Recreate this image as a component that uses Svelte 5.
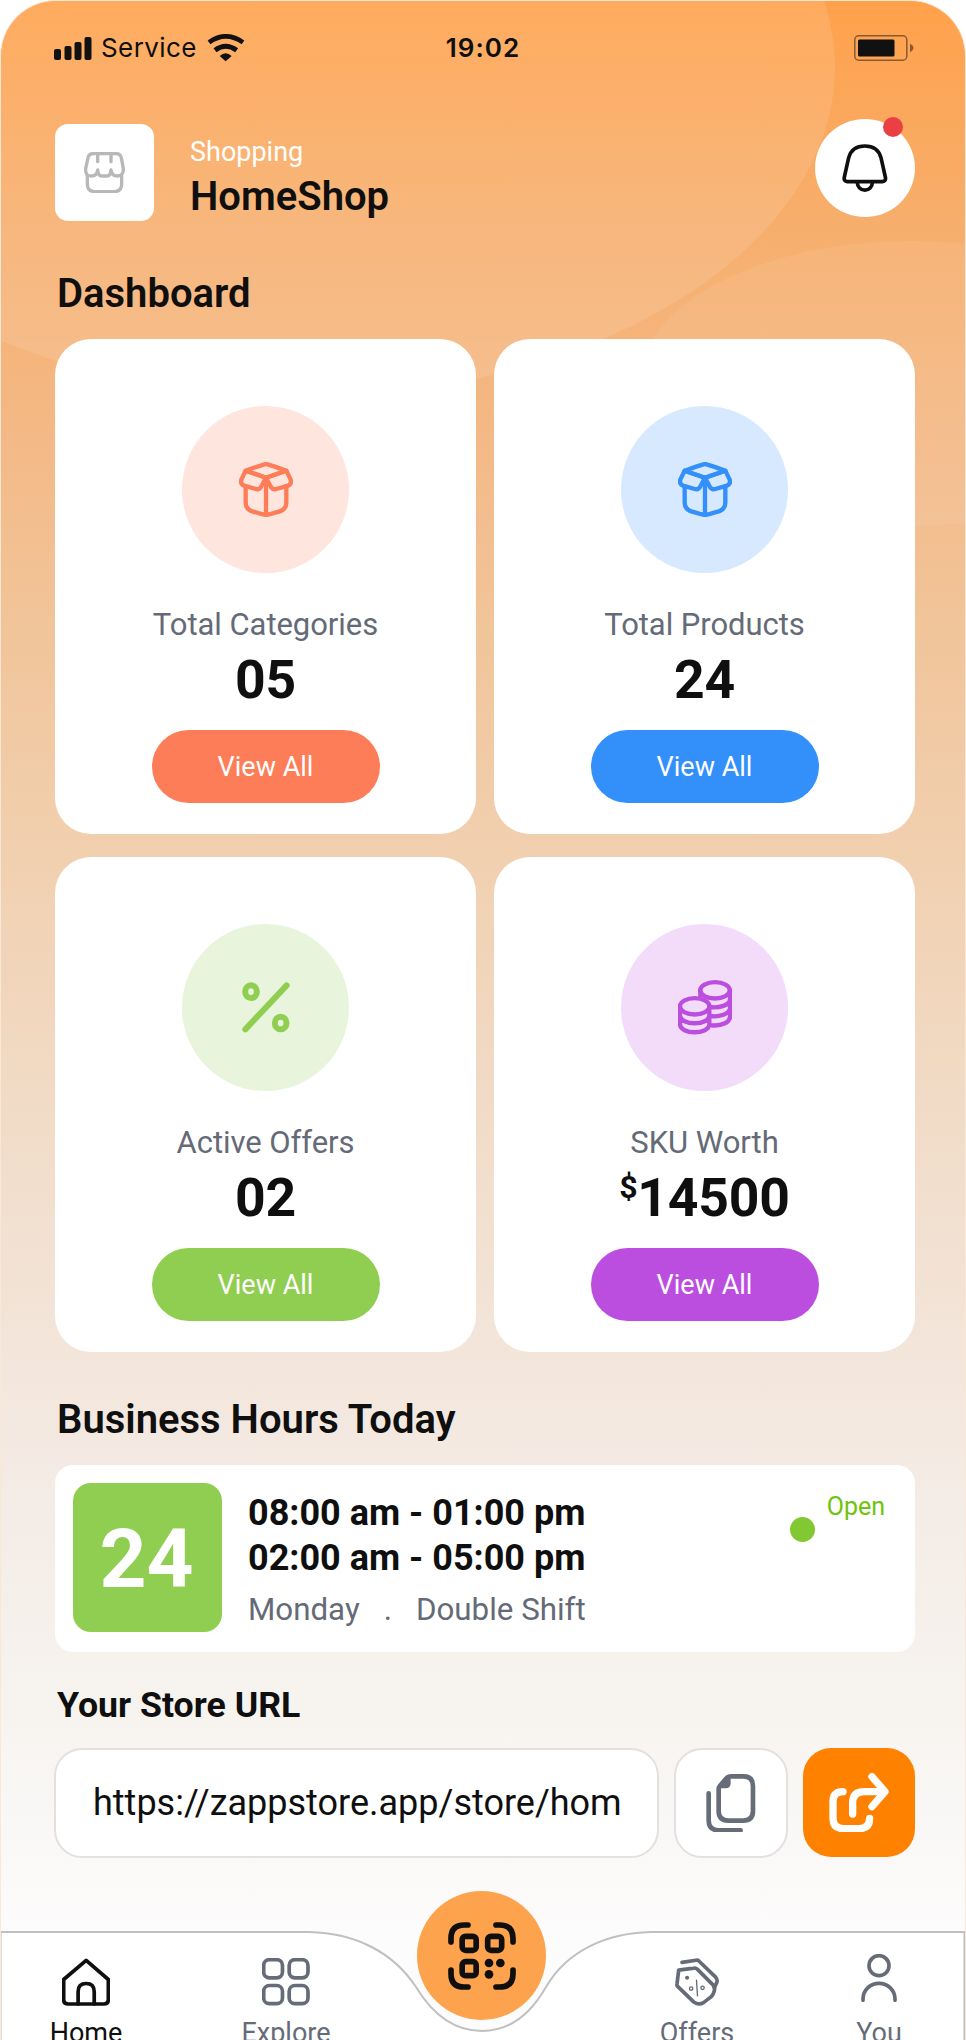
<script lang="ts">
	type IconName = "box" | "percent" | "coins"

	interface StatCard {
		label: string
		value: string
		prefix?: string
		icon: IconName
		tone: string
	}

	const stats: StatCard[] = [
		{ label: "Total Categories", value: "05", icon: "box", tone: "coral" },
		{ label: "Total Products", value: "24", icon: "box", tone: "blue" },
		{ label: "Active Offers", value: "02", icon: "percent", tone: "green" },
		{ label: "SKU Worth", value: "14500", prefix: "$", icon: "coins", tone: "purple" },
	];

	const shifts = ["08:00 am - 01:00 pm", "02:00 am - 05:00 pm"];
	const storeUrl = "https://zappstore.app/store/hom";
</script>

{#snippet statIcon(name: IconName)}
	{#if name === "box"}
		<svg class="icon" width="54" height="54.7" viewBox="208 216 162 164" stroke-width="13">
			<path d="M289 222 Q294 222 350 242 L289 263 L228 242 Q284 222 289 222Z" />
			<path d="M228 242 L215 269 Q211 282 223 287 L258 297 Q269 300 274 291 L289 263Z" />
			<path d="M350 242 L363 269 Q367 282 355 287 L320 297 Q309 300 304 291 L289 263Z" />
			<path d="M228 289 V338 Q228 357 248 364 Q284 375 289 375 Q294 375 330 364 Q350 357 350 338 V289 M289 263 V374" />
		</svg>
	{:else if name === "percent"}
		<svg class="icon" width="48" height="50.7" viewBox="214 224 144 152" stroke-width="18">
			<path d="M224 366 L348 234" />
			<ellipse cx="241" cy="253" rx="17.5" ry="19" />
			<ellipse cx="330" cy="347" rx="17.5" ry="19" />
		</svg>
	{:else}
		<svg class="icon" width="54" height="55" viewBox="207 211 162 165" stroke-width="13">
			<ellipse cx="318" cy="242" rx="44.5" ry="24.5" />
			<path d="M274 242 V262 M363 242 V320 C363 339 336 350 308 347 M363 268 C363 287 330 296 302 292 M363 295 C363 313 330 323 304 319" />
			<ellipse cx="257" cy="290" rx="44.5" ry="24.5" />
			<path d="M213 290 V343 C213 376 301 376 301 343 V290 M213 316 C213 349 301 349 301 316" />
		</svg>
	{/if}
{/snippet}

<div class="screen">
	<svg class="backdrop" width="964" height="600" viewBox="1 1 964 600">
		<ellipse cx="300" cy="67" rx="535" ry="330" fill="#fff" fill-opacity=".11" />
		<ellipse cx="910" cy="383.5" rx="271" ry="142.5" fill="#fff" fill-opacity=".07" />
	</svg>

	<div class="statusbar">
		<div class="carrier">
			<svg width="38" height="23" viewBox="0 0 38 23">
				<rect x="0" y="12" width="7" height="11" rx="2" />
				<rect x="10.5" y="9" width="7" height="14" rx="2" />
				<rect x="20.5" y="5" width="7" height="18" rx="2" />
				<rect x="30.5" y="0" width="7" height="23" rx="2" />
			</svg>
			<span>Service</span>
			<svg class="wifi" width="38" height="27.3" viewBox="620 102 114 82">
				<path d="M626 127 Q676 91 728 127" fill="none" stroke="#111" stroke-width="14" />
				<path d="M644 151 Q676 127 709 151" fill="none" stroke="#111" stroke-width="15" />
				<path d="M658 168 Q676 152 694 168 L676 184Z" />
			</svg>
		</div>
		<span class="time">19:02</span>
		<svg class="battery" width="60" height="26" viewBox="0 0 60 26">
			<rect x=".8" y=".8" width="52" height="24.4" rx="4" fill="none" stroke="#111" stroke-opacity=".5" stroke-width="1.5" />
			<rect x="4" y="4.5" width="36.5" height="17" rx="1.5" />
			<path d="M56 8.5 Q63 13 56 17.5Z" fill-opacity=".5" />
		</svg>
	</div>

	<header>
		<div class="logo">
			<svg class="icon" width="41" height="41.3" viewBox="251 453 123 124" stroke-width="10">
				<path d="M277 458 H347 Q360 458 363 470 L369 503 Q370 525 351 525 Q334 525 332 507 Q330 525 320 525 H304 Q294 525 292 507 Q290 525 273 525 Q254 525 256 503 L263 470 Q266 458 277 458Z" />
				<path d="M292 458 V482 M332 458 V482 M261 525 V549 Q261 572 284 572 H341 Q364 572 364 549 V525" />
			</svg>
		</div>
		<div class="shop">
			<span class="kind">Shopping</span>
			<span class="name">HomeShop</span>
		</div>
		<button class="bell" aria-label="Notifications">
			<svg class="icon" width="45.7" height="48.3" viewBox="1080 433 137 145" stroke-width="11">
				<path d="M1096 546 Q1084 545 1087 532 L1100 474 Q1110 439 1148.500 439 Q1187 439 1197 474 L1210 532 Q1213 545 1201 546Z" />
				<path d="M1126 549 A22.500 22.500 0 0 0 1171 549" />
			</svg>
			<span class="badge"></span>
		</button>
	</header>

	<h2>Dashboard</h2>
	<section class="stats">
		{#each stats as { label, value, prefix, icon, tone }}
			<article class="card {tone}">
				<div class="disc">{@render statIcon(icon)}</div>
				<span class="label">{label}</span>
				<strong>{#if prefix}<span class="prefix">{prefix}</span>{/if}{value}</strong>
				<button class="view">View All</button>
			</article>
		{/each}
	</section>

	<h2 class="hours-title">Business Hours Today</h2>
	<section class="hours">
		<div class="date">24</div>
		<div class="shifts">
			{#each shifts as shift}
				<span class="shift">{shift}</span>
			{/each}
			<div class="day">
				<span>Monday</span>
				<span>.</span>
				<span>Double Shift</span>
			</div>
		</div>
		<div class="status">
			<i></i>
			<span>Open</span>
		</div>
	</section>

	<h3>Your Store URL</h3>
	<section class="url">
		<div class="field">{storeUrl}</div>
		<button class="copy" aria-label="Copy">
			<svg class="icon" width="49.3" height="58.7" viewBox="678 318 148 176" stroke-width="14">
				<path d="M754 325 H790 Q819 325 819 354 V429 Q819 458 790 458 H745 Q716 458 716 429 V364 Q716 358 720 353 L738 332 Q744 325 754 325Z" />
				<path d="M748 330 V346 Q748 357 737 357 H720 L740 332Z" fill="currentColor" stroke-width="8" />
				<path d="M686 376 V457 Q686 487 716 487 H782" />
			</svg>
		</button>
		<button class="share" aria-label="Share">
			<svg class="icon" width="59.3" height="59.3" viewBox="1048 311 178 178" stroke-width="22">
				<path d="M1090 367 Q1060 367 1060 397 V447 Q1060 478 1091 478 H1139 Q1170 478 1170 447" />
				<path d="M1119 434 V401 Q1119 367 1153 367 H1214" />
				<path d="M1177 322 L1216 367 L1177 412" />
			</svg>
		</button>
	</section>

	<nav>
		<svg class="notch" width="966" height="150" viewBox="0 0 966 150">
			<path d="M0.500 160 V42 H309 C355 43 393 62 416 97 C433 125 455 141 482 141 C508 141 530 125 546 97 C567 61 606 43 651 42 H964.500 V160Z" fill="#fff" stroke="#c0c0c0" stroke-width="2" />
		</svg>
		<a class="tab active" href="#home">
			<svg class="icon" width="48" height="48" viewBox="64 866 143 143" stroke-width="11">
				<path d="M69 930 L136 873 L202 930 V990 Q202 1003 189 1003 H82 Q69 1003 69 990Z" />
				<path d="M112 1003 V966 Q112 942 136 942 Q160 942 160 966 V1003" />
			</svg>
			<span>Home</span>
		</a>
		<a class="tab" href="#explore">
			<svg class="icon" width="48" height="48" viewBox="666 867 143 143" stroke-width="11">
				<rect x="671" y="872" width="56" height="54" rx="17" />
				<rect x="747" y="872" width="56" height="54" rx="17" />
				<rect x="671" y="949" width="56" height="54" rx="17" />
				<rect x="747" y="949" width="56" height="54" rx="17" />
			</svg>
			<span>Explore</span>
		</a>
		<button class="scan" aria-label="Scan">
			<svg class="icon" width="68" height="68" viewBox="1227 751 204 204" stroke-width="17">
				<path d="M1236 811 V800 Q1236 760 1276 760 H1287 M1371 760 H1382 Q1422 760 1422 800 V811 M1422 895 V906 Q1422 946 1382 946 H1371 M1287 946 H1276 Q1236 946 1236 906 V895" />
				<rect x="1269.500" y="794" width="42" height="42" rx="10" />
				<rect x="1346" y="794" width="42" height="42" rx="10" />
				<rect x="1269.500" y="870" width="42" height="42" rx="10" />
				<g fill="currentColor" stroke="none">
					<circle cx="1350" cy="874" r="13" />
					<circle cx="1384" cy="874" r="13" />
					<circle cx="1350" cy="908" r="13" />
				</g>
			</svg>
		</button>
		<a class="tab" href="#offers">
			<svg class="icon" width="44" height="48" viewBox="589 866 131 143" stroke-width="11">
				<path d="M600 902 L645 896 Q651 895 656 900 L702 946 Q709 953 706 964 Q704 974 697 981 L674 999 Q660 1007 646 998 L596 950 Q594 947 595 943Z" />
				<path d="M610 879 L657 872 L710 923 Q717 931 713 940 L706 955" />
				<circle cx="625" cy="925" r="6" fill="currentColor" stroke="none" />
				<path d="M653 932 L656 979" stroke-width="4" />
				<circle cx="637" cy="957" r="5" stroke-width="4" />
				<circle cx="671" cy="955" r="5" stroke-width="4" />
			</svg>
			<span>Offers</span>
		</a>
		<a class="tab you" href="#you">
			<svg class="icon" width="36" height="48" viewBox="1141 853 108 144" stroke-width="11">
				<circle cx="1195" cy="888" r="30" />
				<path d="M1147 992 V988 A48 47 0 0 1 1243 988 V992" />
			</svg>
			<span>You</span>
		</a>
	</nav>
</div>

<style>
	:global(body) {
		margin: 0;
		background: #fff;
	}

	.screen {
		position: relative;
		display: flex;
		flex-direction: column;
		box-sizing: border-box;
		width: 966px;
		height: 2040px;
		overflow: hidden;
		border: 1px solid #fbe7d5;
		border-bottom: none;
		border-radius: 56px 56px 0 0;
		background: linear-gradient(
			#ffa14b 0,
			#f7ae6c 220px,
			#f4b782 400px,
			#f1c59b 640px,
			#f1d0b0 860px,
			#f1dbc6 1100px,
			#f3e6dc 1370px,
			#f4ece6 1500px,
			#f6f2ed 1670px,
			#f9f7f5 1800px,
			#fdfcfc 1940px
		);
		color: #0f0f0f;
		font-family: Roboto, "Liberation Sans", sans-serif;
	}

	.backdrop {
		position: absolute;
		top: 0;
		left: 0;
	}

	.screen > :not(.backdrop) {
		position: relative;
	}

	.icon {
		display: block;
		flex: none;
		fill: none;
		stroke: currentColor;
		stroke-linecap: round;
		stroke-linejoin: round;
	}

	button {
		display: flex;
		align-items: center;
		justify-content: center;
		padding: 0;
		border: none;
		color: inherit;
		font: inherit;
	}

	.statusbar {
		display: grid;
		grid-template-columns: 1fr auto 1fr;
		align-items: center;
		height: 94px;
		padding: 0 53px;
		font: 400 26px/30px Inter, sans-serif;
		fill: #111;
	}

	.carrier {
		display: flex;
		align-items: center;
		gap: 9px;
		letter-spacing: .4px;
	}

	.wifi {
		margin-left: 1px;
	}

	.time {
		font-weight: 600;
		letter-spacing: 1px;
	}

	.battery {
		justify-self: end;
		margin-right: -2px;
	}

	header {
		display: flex;
		align-items: flex-start;
		height: 103px;
		padding: 0 50px 0 54px;
		margin-top: 24px;
	}

	.logo {
		display: flex;
		align-items: center;
		justify-content: center;
		width: 99px;
		height: 97px;
		margin-top: 5px;
		border-radius: 13px;
		background: #fff;
		color: #b8b8b8;
	}

	.shop {
		display: flex;
		flex-direction: column;
		flex: 1;
		margin: 17px 0 0 36px;
	}

	.kind {
		color: #fff;
		font-size: 27px;
		line-height: 32px;
	}

	.name {
		margin-top: 6px;
		font-size: 40px;
		font-weight: 600;
		line-height: 46px;
	}

	.bell {
		position: relative;
		width: 100px;
		height: 98px;
		border-radius: 50%;
		background: #fff;
	}

	.badge {
		position: absolute;
		top: -2px;
		right: 12px;
		width: 20px;
		height: 20px;
		border-radius: 50%;
		background: #ea4044;
	}

	h2 {
		margin: 48px 0 20.5px 56px;
		font-size: 40px;
		font-weight: 600;
		line-height: 48px;
	}

	.stats {
		display: grid;
		grid-template-columns: 1fr 1fr;
		gap: 22.5px 18px;
		padding: 0 50px 0 54px;
	}

	.card {
		display: flex;
		flex-direction: column;
		align-items: center;
		box-sizing: border-box;
		height: 495.5px;
		padding-top: 67.5px;
		border-radius: 36px;
		background: #fff;
	}

	.disc {
		display: flex;
		align-items: center;
		justify-content: center;
		width: 167px;
		height: 167px;
		border-radius: 50%;
		background: var(--tint);
		color: var(--tone);
	}

	.coral {
		--tone: #fd7d58;
		--tint: #fee5de;
	}

	.blue {
		--tone: #338ff9;
		--tint: #d7e9fe;
	}

	.green {
		--tone: #8fce50;
		--tint: #e8f4dc;
	}

	.purple {
		--tone: #bb4edf;
		--tint: #f2dcf9;
	}

	.label {
		margin-top: 33px;
		color: #656a77;
		font-size: 31px;
		letter-spacing: -.05px;
		line-height: 38px;
	}

	strong {
		margin-top: 6px;
		font-size: 53.5px;
		font-weight: 700;
		letter-spacing: -.2px;
		line-height: 60px;
	}

	.prefix {
		font-size: 32px;
		font-weight: 700;
		line-height: 1;
		vertical-align: 18px;
	}

	.view {
		width: 228px;
		height: 73px;
		margin-top: 20px;
		border-radius: 37px;
		background: var(--tone);
		color: #fff;
		font-size: 27px;
	}

	.hours-title {
		margin-top: 43.5px;
		margin-bottom: 21px;
	}

	.hours {
		display: flex;
		box-sizing: border-box;
		height: 187px;
		margin: 0 50px 0 54px;
		padding: 18px 30px 18px 18px;
		border-radius: 18px;
		background: #fff;
	}

	.date {
		display: flex;
		align-items: center;
		justify-content: center;
		box-sizing: border-box;
		width: 149px;
		height: 149px;
		padding: 4px 2px 0 0;
		border-radius: 18px;
		background: #8fce50;
		color: #fff;
		font-size: 82px;
		font-weight: 700;
	}

	.shifts {
		display: flex;
		flex: 1;
		flex-direction: column;
		margin: 8px 0 0 26px;
	}

	.shift {
		font-size: 36px;
		font-weight: 700;
		line-height: 45px;
	}

	.day {
		display: flex;
		gap: 24px;
		margin-top: 10px;
		color: #656a77;
		font-size: 31.3px;
		line-height: 38px;
	}

	.status {
		display: flex;
		align-items: flex-start;
		gap: 12px;
		margin-top: 9px;
		color: #6fc30c;
		font-size: 25px;
		line-height: 30px;
	}

	.status i {
		width: 25px;
		height: 25px;
		margin-top: 25px;
		border-radius: 50%;
		background: #82c832;
	}

	h3 {
		margin: 31.5px 0 21px 56px;
		font-size: 35.7px;
		font-weight: 700;
		line-height: 44px;
	}

	.url {
		display: flex;
		gap: 15px;
		padding: 0 50px 0 53px;
	}

	.field,
	.copy {
		box-sizing: border-box;
		height: 110px;
		border: 2px solid #e3e0df;
		border-radius: 28px;
		background: #fff;
	}

	.field {
		flex: 1;
		padding: 0 0 0 37px;
		font-size: 36px;
		line-height: 107px;
		white-space: nowrap;
	}

	.copy {
		width: 114px;
		color: #676c79;
	}

	.share {
		width: 112px;
		height: 109px;
		border-radius: 28px;
		background: #ff8100;
		color: #fff;
	}

	nav {
		display: flex;
		box-sizing: border-box;
		height: 150px;
		margin: auto -1px 0;
		padding: 0 22px;
	}

	.notch {
		position: absolute;
		top: 0;
		left: 0;
	}

	.tab {
		position: relative;
		display: flex;
		flex-direction: column;
		align-items: center;
		gap: 11px;
		width: 128px;
		padding-top: 68px;
		color: #666b78;
		font-size: 27px;
		line-height: 32px;
		text-decoration: none;
	}

	.active {
		color: #0f0f0f;
	}

	.tab + .tab {
		margin-left: 72px;
	}

	.scan {
		position: relative;
		width: 129px;
		height: 129px;
		margin: 1px 87px 0 67px;
		border-radius: 50%;
		background: #fda34e;
	}

	.tab.you {
		gap: 15px;
		margin-left: 54px;
		padding-top: 64px;
	}
</style>
